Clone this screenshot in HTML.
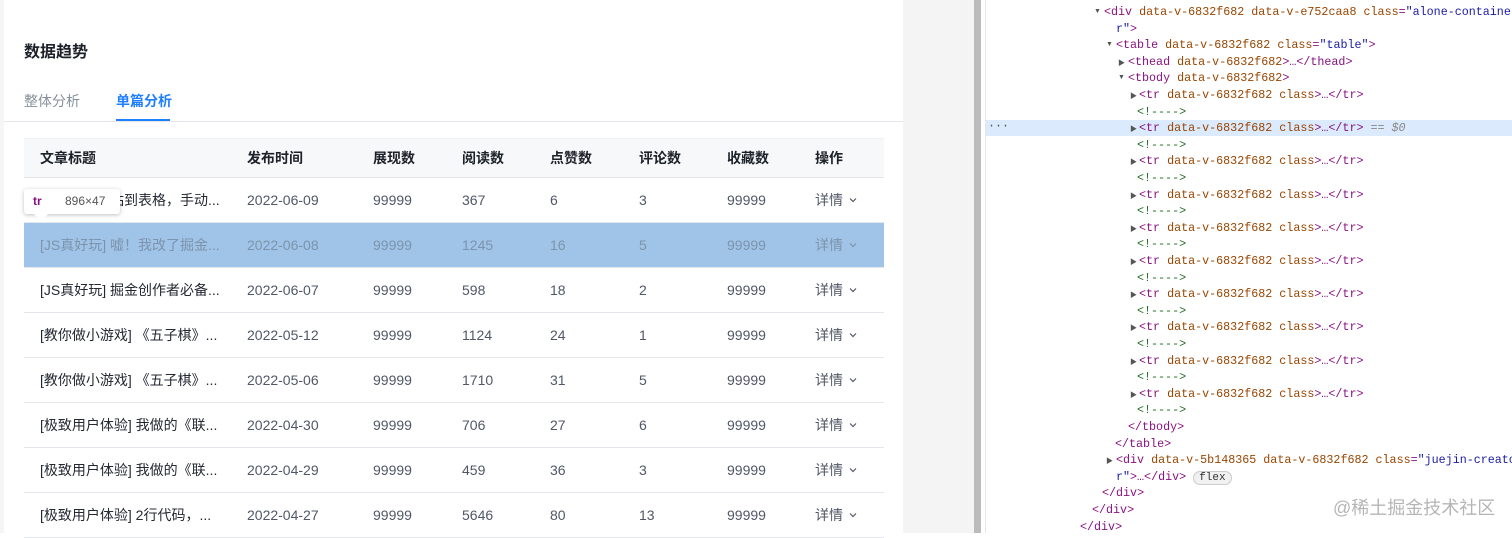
<!DOCTYPE html>
<html><head><meta charset="utf-8"><style>
*{margin:0;padding:0;box-sizing:border-box}
body{width:1512px;height:533px;overflow:hidden;background:#fff;position:relative;font-family:"Liberation Sans","Noto Sans CJK SC",sans-serif}
.a{position:absolute;white-space:nowrap}
#left{position:absolute;left:0;top:0;width:903px;height:533px;background:#fff;border-left:4px solid #f4f5f5}
#gap{position:absolute;left:903px;top:0;width:71px;height:533px;background:#f4f4f4}
#bar{position:absolute;left:974px;top:0;width:7px;height:533px;background:#bbb}
#line{position:absolute;left:985px;top:0;width:1px;height:533px;background:#e6e6e6}
.th{top:138px;height:40px;left:24px;width:860px;background:#f7f8fa;border-top:1px solid #eef0f3;border-bottom:1px solid #e5e6eb}
.row{left:24px;width:860px;height:45px;border-bottom:1px solid #e5e6eb}
.c{position:absolute;font-size:14px;color:#515767;line-height:45px;white-space:nowrap}
.h{font-weight:bold;color:#1d2129;line-height:40px;font-size:14px;position:absolute}
.t{color:#252933}
.dev{position:absolute;font-family:"Liberation Mono","Noto Sans CJK SC",monospace;font-size:11.7px;line-height:16.6px;white-space:nowrap;color:#881280}
.n{color:#994500}.v{color:#1a1aa6}.cm{color:#236e25}
.tri{color:#555;font-size:7px;position:absolute}
</style></head><body>
<div id="left"></div><div id="gap"></div><div id="bar"></div><div id="line"></div>
<div class="a" style="left:24px;top:38px;font-size:16px;font-weight:bold;color:#1d2129">数据趋势</div>
<div class="a" style="left:24px;top:91px;font-size:14px;color:#86909c">整体分析</div>
<div class="a" style="left:116px;top:91px;font-size:14px;color:#1e80ff;font-weight:bold">单篇分析</div>
<div class="a" style="left:116px;top:119px;width:54px;height:2px;background:#1e80ff"></div>
<div class="a" style="left:4px;top:121px;width:899px;height:1px;background:#e5e6eb"></div>
<div class="a th"></div>
<div class="h" style="left:40px;top:138px">文章标题</div><div class="h" style="left:247px;top:138px">发布时间</div><div class="h" style="left:373px;top:138px">展现数</div><div class="h" style="left:462px;top:138px">阅读数</div><div class="h" style="left:550px;top:138px">点赞数</div><div class="h" style="left:639px;top:138px">评论数</div><div class="h" style="left:727px;top:138px">收藏数</div><div class="h" style="left:815px;top:138px">操作</div>
<div id="rows"></div>
<script>
var d=[["[JS真好玩] 粘到表格，手动...","2022-06-09","367","6","3"],["[JS真好玩] 嘘！我改了掘金...","2022-06-08","1245","16","5"],["[JS真好玩] 掘金创作者必备...","2022-06-07","598","18","2"],["[教你做小游戏] 《五子棋》...","2022-05-12","1124","24","1"],["[教你做小游戏] 《五子棋》...","2022-05-06","1710","31","5"],["[极致用户体验] 我做的《联...","2022-04-30","706","27","6"],["[极致用户体验] 我做的《联...","2022-04-29","459","36","3"],["[极致用户体验] 2行代码，...","2022-04-27","5646","80","13"]];
var h="";d.forEach(function(r,i){var y=178+45*i;var hl=i==1;var col=hl?"color:#7d93ad;":"";
h+='<div class="a row" style="top:'+y+'px;'+(hl?'background:#9fc4e7;':'')+'"></div>';
var xs=[40,247,373,462,550,639,727,815];var vals=[r[0],r[1],"99999",r[2],r[3],r[4],"99999",""];
var sc=hl?"#7d93ad":"#515767";
vals.forEach(function(v,j){h+='<div class="c'+(j==0?' t':'')+'" style="left:'+xs[j]+'px;top:'+y+'px;'+col+'">'+(j==7?'详情<svg width="12" height="12" style="margin-left:4px;vertical-align:-1px" viewBox="0 0 12 12"><path d="M3 4.5L6 7.5L9 4.5" fill="none" stroke="'+sc+'" stroke-width="1.2"/></svg>':v)+'</div>';});});
document.getElementById("rows").innerHTML=h;
</script>
<div class="a" style="left:24px;top:189px;width:96px;height:25px;background:#fff;border-radius:3px;box-shadow:0 1px 4px rgba(0,0,0,.25);font-size:12px;line-height:25px">
<span style="position:absolute;left:9px;color:#881280;font-weight:bold">tr</span><span style="position:absolute;left:41px;color:#555">896×47</span></div>
<div class="a" style="left:34px;top:214px;width:0;height:0;border-left:7px solid transparent;border-right:7px solid transparent;border-top:7px solid #fff"></div>
<div class="a" style="left:986px;top:120px;width:526px;height:16px;background:#dbeafd"></div>
<div class="dev" style="left:988px;top:118px;color:#555">···</div>
<div id="dv"></div>
<script>
function tr(){return '&lt;tr <span class="n">data-v-6832f682</span> <span class="n">class</span>&gt;…&lt;/tr&gt;'}
var lines=[
[1094,1104,'&lt;div <span class="n">data-v-6832f682 data-v-e752caa8</span> <span class="n">class</span>=<span class="v">"alone-containe</span>',1],
[0,1116,'<span class="v">r"</span>&gt;',0],
[1106,1116,'&lt;table <span class="n">data-v-6832f682</span> <span class="n">class</span>=<span class="v">"table"</span>&gt;',1],
[1118,1128,'&lt;thead <span class="n">data-v-6832f682</span>&gt;…&lt;/thead&gt;',2],
[1118,1128,'&lt;tbody <span class="n">data-v-6832f682</span>&gt;',1]];
for(var i=0;i<10;i++){lines.push([1130,1139,tr()+(i==1?' <span style="color:#888">== <i>$0</i></span>':''),2]);lines.push([0,1137,'<span class="cm">&lt;!----&gt;</span>',0]);}
lines.push([0,1128,'&lt;/tbody&gt;',0]);lines.push([0,1115,'&lt;/table&gt;',0]);
lines.push([1106,1116,'&lt;div <span class="n">data-v-5b148365 data-v-6832f682</span> <span class="n">class</span>=<span class="v">"juejin-creato</span>',2]);
lines.push([0,1116,'<span class="v">r"</span>&gt;…&lt;/div&gt; <span style="color:#333;background:#f1f1f1;border:1px solid #ccc;border-radius:8px;padding:0 5px;font-size:11px">flex</span>',0]);
lines.push([0,1102,'&lt;/div&gt;',0]);lines.push([0,1092,'&lt;/div&gt;',0]);lines.push([0,1080,'&lt;/div&gt;',0]);
var o="";lines.forEach(function(l,i){var y=4+i*16.6;if(l[3])o+='<div class="tri" style="left:'+l[0]+'px;top:'+(y+4)+'px">'+(l[3]==1?'▼':'▶')+'</div>';o+='<div class="dev" style="left:'+l[1]+'px;top:'+y+'px">'+l[2]+'</div>';});
document.getElementById("dv").innerHTML=o;
</script>
<div class="a" style="left:1333px;top:494px;font-size:18px;color:rgba(150,150,150,.7)">@稀土掘金技术社区</div>
</body></html>
